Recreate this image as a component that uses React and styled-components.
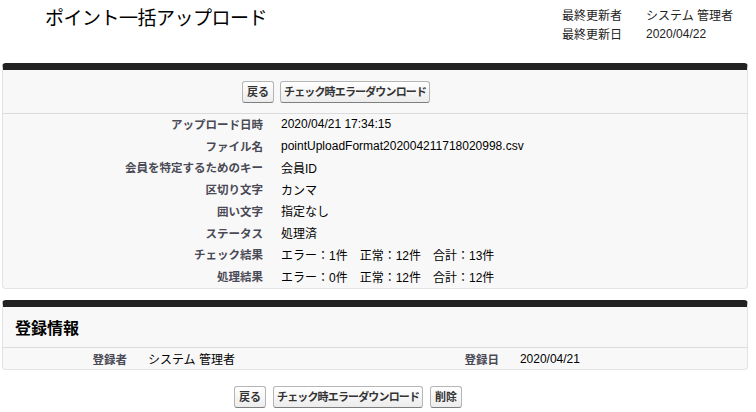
import styled, { createGlobalStyle } from 'styled-components';

const GlobalStyle = createGlobalStyle`
  body {
    margin: 0;
    background: #fff;
    font-family: "Liberation Sans", "Noto Sans CJK JP", sans-serif;
    font-size: 12px;
    color: #000;
  }
`;

const Page = styled.div`
  width: 756px;
  padding: 0 8px 0 2px;
  box-sizing: border-box;
`;

const Header = styled.div`
  display: flex;
  justify-content: space-between;
  height: 63px;
  padding-left: 43px;
`;

const Title = styled.h1`
  margin: 6px 0 0;
  font-size: 19px;
  font-weight: normal;
  letter-spacing: -0.5px;
  line-height: 26px;
  color: #000;
`;

const Meta = styled.div`
  display: grid;
  grid-template-columns: 84px auto;
  grid-auto-rows: 19px;
  align-items: center;
  padding-top: 5px;
  width: 186px;
  font-size: 12px;
  color: #222;
`;

const Panel = styled.section`
  background: #f8f8f8;
  border: 1px solid #e3e3e3;
  border-top: 7px solid #222;
  border-radius: 4px;
  margin-bottom: ${(p) => p.$gap || 0}px;
`;

const ButtonRow = styled.div`
  display: flex;
  gap: ${(p) => p.$gap || 6}px;
  padding: ${(p) => p.$pad || '11px 0 10px'};
  padding-left: ${(p) => p.$left}px;
  border-bottom: ${(p) => (p.$line ? '1px solid #dbdbdb' : 'none')};
`;

const Button = styled.button`
  height: 22px;
  padding: 0 ${(p) => (p.$tight ? 3 : 4)}px;
  border: 1px solid #b5b5b5;
  border-bottom-color: #7f7f7f;
  border-radius: 3px;
  background: linear-gradient(#ffffff, #ececec);
  font-family: "Liberation Sans", "Noto Sans CJK JP", sans-serif;
  font-size: 11px;
  font-weight: bold;
  letter-spacing: ${(p) => (p.$tight ? '-0.85px' : '0')};
  color: #333;
  line-height: 20px;
`;

const Details = styled.div`
  display: grid;
  grid-template-columns: 270px 1fr;
  grid-auto-rows: 21.75px;
  align-items: center;
  margin-top: -1px;
  padding-bottom: 1px;
`;

const Label = styled.div`
  text-align: right;
  padding-right: 10px;
  font-size: 11.5px;
  font-weight: bold;
  color: #4a4a56;
`;

const Value = styled.div`
  padding-left: ${(p) => p.$pad || 8}px;
  font-size: 12px;
  color: #000;
  white-space: pre;
`;

const SectionTitle = styled.h2`
  margin: 0;
  padding: 10px 12px 0;
  height: 41px;
  box-sizing: border-box;
  font-size: 16px;
  font-weight: bold;
  line-height: 24px;
  color: #000;
  border-bottom: 1px solid #dbdbdb;
`;

const InfoRow = styled.div`
  display: grid;
  grid-template-columns: 18% 32% 18% 32%;
  height: 21px;
  align-items: center;
`;

const rows = [
  ['アップロード日時', '2020/04/21 17:34:15'],
  ['ファイル名', 'pointUploadFormat202004211718020998.csv'],
  ['会員を特定するためのキー', '会員ID'],
  ['区切り文字', 'カンマ'],
  ['囲い文字', '指定なし'],
  ['ステータス', '処理済'],
  ['チェック結果', 'エラー：1件　正常：12件　合計：13件'],
  ['処理結果', 'エラー：0件　正常：12件　合計：12件'],
];

export default function App() {
  return (
    <Page>
      <GlobalStyle />
      <Header>
        <Title>ポイント一括アップロード</Title>
        <Meta>
          <span>最終更新者</span>
          <span>システム 管理者</span>
          <span>最終更新日</span>
          <span>2020/04/22</span>
        </Meta>
      </Header>

      <Panel $gap={11}>
        <ButtonRow $left={239} $line>
          <Button>戻る</Button>
          <Button $tight>チェック時エラーダウンロード</Button>
        </ButtonRow>
        <Details>
          {rows.map(([label, value]) => [
            <Label key={label}>{label}</Label>,
            <Value key={label + '-v'}>{value}</Value>,
          ])}
        </Details>
      </Panel>

      <Panel>
        <SectionTitle>登録情報</SectionTitle>
        <InfoRow>
          <Label>登録者</Label>
          <Value $pad={11}>システム 管理者</Value>
          <Label>登録日</Label>
          <Value $pad={11}>2020/04/21</Value>
        </InfoRow>
      </Panel>

      <ButtonRow $left={232} $gap={7} $pad="16px 0 0">
        <Button>戻る</Button>
        <Button $tight>チェック時エラーダウンロード</Button>
        <Button>削除</Button>
      </ButtonRow>
    </Page>
  );
}
